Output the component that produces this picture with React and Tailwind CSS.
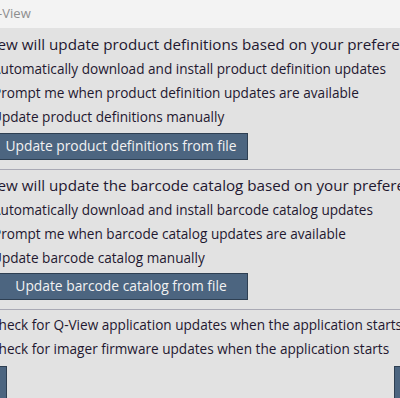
const font = { fontFamily: '"Open Sans", "Noto Sans", sans-serif' };

function Option({ children, shift }) {
  return (
    <div className={`h-6 flex items-center whitespace-nowrap text-[13.6px] text-[#1f1830] ${shift}`}>
      {children}
    </div>
  );
}

function Heading({ children }) {
  return (
    <div className="h-[26px] flex items-center whitespace-nowrap text-[15.2px] text-[#1f1830] -ml-[32px]">
      {children}
    </div>
  );
}

function FileButton({ children }) {
  return (
    <button className="-ml-[6px] w-[254px] h-[27px] bg-[#4c6580] border border-[#2e3f52] text-[13.8px] text-[#f2f2f2] whitespace-nowrap flex items-center justify-center">
      {children}
    </button>
  );
}

export default function App() {
  return (
    <div className="w-[400px] h-[398px] overflow-hidden bg-[#e2e2e2]" style={font}>
      {/* title bar */}
      <div className="h-[28px] bg-[#f3f3f3] flex items-center -ml-[12px] text-[13px] text-[#8e8e8e]">
        Q-View
      </div>

      <div className="flex flex-col">
        <div className="mt-[3px]">
          <Heading>Q-View will update product definitions based on your preferences</Heading>
        </div>
        <Option shift="-ml-[8px]">Automatically download and install product definition updates</Option>
        <Option shift="-ml-[7px]">Prompt me when product definition updates are available</Option>
        <Option shift="-ml-[8px]">Update product definitions manually</Option>
        <div className="mt-1">
          <FileButton>Update product definitions from file</FileButton>
        </div>

        <div className="mt-[9px] h-px bg-[#a9a9b4]" />

        <div className="mt-[2px]">
          <Heading>Q-View will update the barcode catalog based on your preferences</Heading>
        </div>
        <Option shift="-ml-[8px]">Automatically download and install barcode catalog updates</Option>
        <Option shift="-ml-[7px]">Prompt me when barcode catalog updates are available</Option>
        <Option shift="-ml-[8px]">Update barcode catalog manually</Option>
        <div className="mt-[3px]">
          <FileButton>Update barcode catalog from file</FileButton>
        </div>

        <div className="mt-[9px] h-px bg-[#a9a9b4]" />

        <div className="mt-[3px]">
          <Option shift="-ml-[10px]">Check for Q-View application updates when the application starts</Option>
          <Option shift="-ml-[10px]">Check for imager firmware updates when the application starts</Option>
        </div>

        <div className="mt-[5px] flex justify-between">
          <div className="-ml-[80px] w-[87px] h-[34px] bg-[#4c6580] border border-[#2e3f52]" />
          <div className="-mr-[80px] w-[86px] h-[34px] bg-[#4c6580] border border-[#2e3f52]" />
        </div>
      </div>
    </div>
  );
}
